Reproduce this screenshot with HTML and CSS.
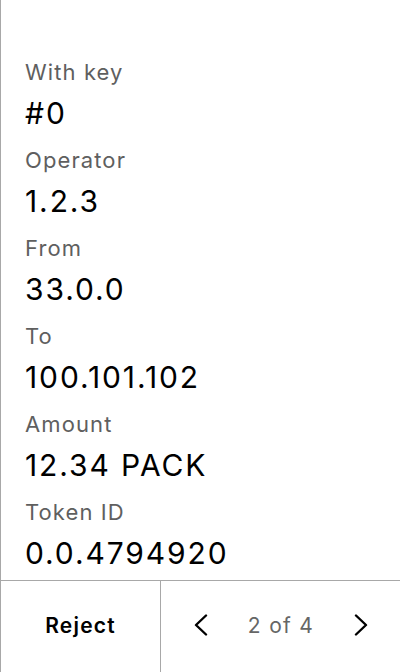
FILE: index.html
```html
<!DOCTYPE html>
<html>
<head>
<meta charset="utf-8">
<link rel="stylesheet" href="styles.css">
</head>
<body>
<div class="screen">
  <div class="details">
    <div class="field"><div class="label">With key</div><div class="value">#0</div></div>
    <div class="field"><div class="label">Operator</div><div class="value">1.2.3</div></div>
    <div class="field"><div class="label">From</div><div class="value">33.0.0</div></div>
    <div class="field"><div class="label">To</div><div class="value">100.101.102</div></div>
    <div class="field"><div class="label">Amount</div><div class="value">12.34 PACK</div></div>
    <div class="field"><div class="label">Token ID</div><div class="value">0.0.4794920</div></div>
  </div>
  <div class="footer">
    <div class="reject">Reject</div>
    <div class="pager">
      <svg class="chev" width="14" height="22" viewBox="0 0 14 22"><path d="M12 1.5 L2 11 L12 20.5" fill="none" stroke="#000" stroke-width="2.4" stroke-linecap="round" stroke-linejoin="round"/></svg>
      <span class="count">2 of 4</span>
      <svg class="chev" width="14" height="22" viewBox="0 0 14 22"><path d="M2 1.5 L12 11 L2 20.5" fill="none" stroke="#000" stroke-width="2.4" stroke-linecap="round" stroke-linejoin="round"/></svg>
    </div>
  </div>
</div>
</body>
</html>
```
FILE: styles.css
```css
html, body { margin: 0; padding: 0; background: #fff; }
body { font-family: Inter, "Noto Sans", sans-serif; color: #000; }
.screen {
  width: 400px; height: 672px; box-sizing: border-box;
  border-left: 1px solid #a8a8a8;
  display: flex; flex-direction: column;
}
.details {
  flex: 1; padding: 58px 0 0 24px;
  display: flex; flex-direction: column; gap: 6px;
}
.field { height: 82px; }
.label { font-size: 22px; line-height: 28px; color: #5f5f5f; letter-spacing: 1.1px; }
.value {
  font-size: 30px; line-height: 54px; color: #000;
  letter-spacing: 1.9px;
}
.footer {
  height: 92px; border-top: 1px solid #a8a8a8;
  display: flex; box-sizing: border-box;
}
.reject {
  width: 159px; border-right: 1px solid #a8a8a8;
  display: flex; align-items: center; justify-content: center;
  font-size: 21px; font-weight: 600; letter-spacing: 1.2px;
  padding-bottom: 3px;
}
.pager {
  flex: 1; display: flex; align-items: center; justify-content: space-between;
  padding: 0 32px 3px 33px;
}
.count { font-size: 21px; color: #666; letter-spacing: 1.3px; }
```
